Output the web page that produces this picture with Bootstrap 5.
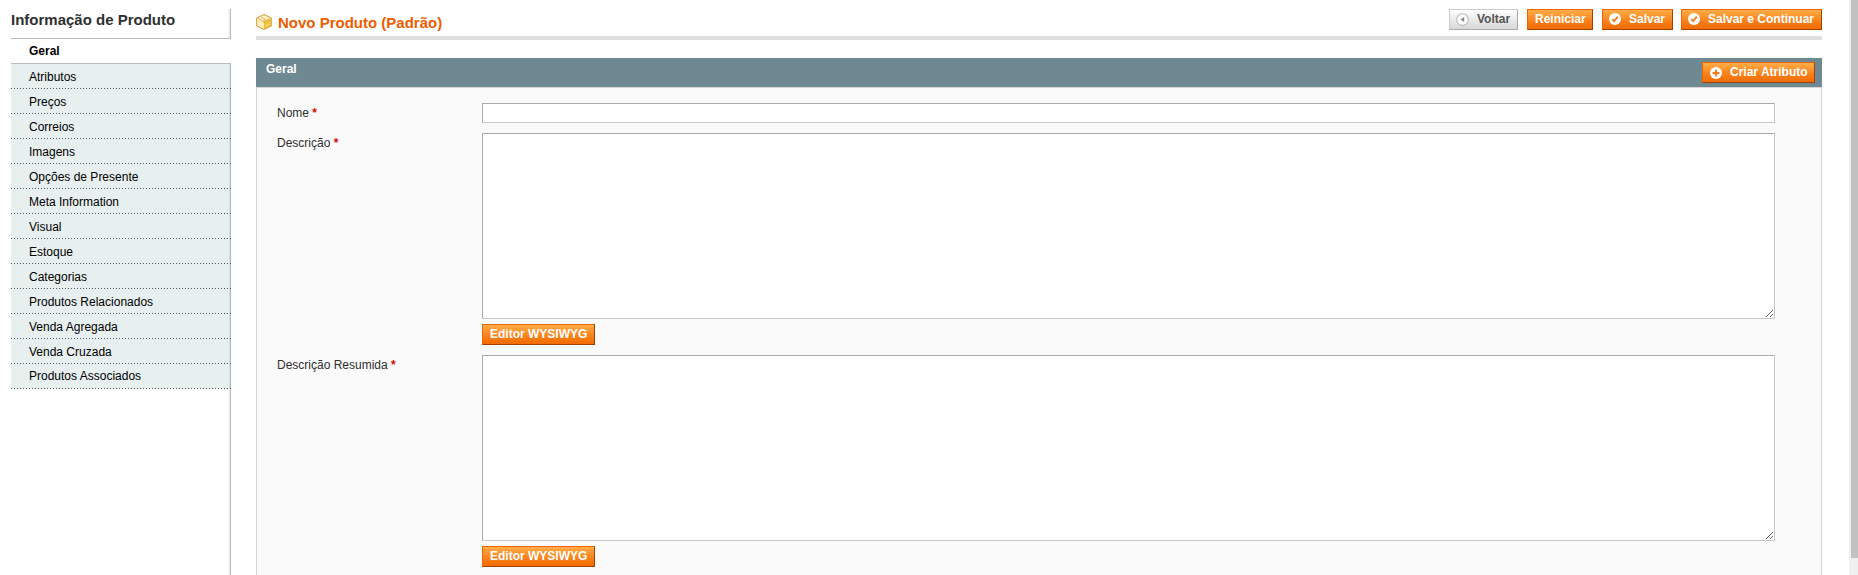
<!DOCTYPE html>
<html lang="pt-BR">
<head>
<meta charset="utf-8">
<title>Novo Produto</title>
<link href="https://cdn.jsdelivr.net/npm/bootstrap@5.3.0/dist/css/bootstrap.min.css" rel="stylesheet">
<style>
html,body{height:100%;overflow:hidden}
body{font:12px/18px "Liberation Sans",Arial,sans-serif;color:#2f2f2f;background:#fff}
.side{width:220px;margin:9px 25px 0 11px;background:linear-gradient(90deg,#f6f6f6 0 1px,#ebebeb 1px 2px,#bcbcbc 2px 3px) right/3px 100% no-repeat}
.side h3{font-size:15px;line-height:20px;font-weight:700;height:29px;margin:0;padding-top:1px}
.tabs{border-radius:0;--bs-list-group-border-radius:0}
.tabs a{display:block;height:25px;line-height:18px;padding:4px 18px 0;color:#000;text-decoration:none;border:0;
 background:repeating-linear-gradient(90deg,#4f5b5d 0 1px,transparent 1px 3px) 0 100%/100% 1px no-repeat,linear-gradient(90deg,#d5dfdf 0 1px,#a9bfc3 1px 2px) right/2px 100% no-repeat,#e7efef}
.tabs a:last-child{padding-top:3px}
.tabs a.current{height:26px;padding-top:3px;background:#fff;border:solid #bcbcbc;border-width:1px 0;font-weight:700}
.page-head{height:31px;border-bottom:4px solid #dfdfdf;margin-top:9px}
.page-head,.panel-head{flex-shrink:0}
.page-head h1{font-size:15px;line-height:20px;font-weight:700;color:#eb5e00;margin:0;padding-top:4px}
.page-head svg.cube{margin-top:5px;margin-right:6px;flex:none}
.mbtn{--bs-btn-border-radius:0;height:21px;padding:0 7px;border:1px solid;border-color:#ed6502 #a04300 #a04300 #ed6502;border-radius:0;font:bold 12px/19px "Liberation Sans",Arial,sans-serif;color:#fff;background:linear-gradient(#ffac47,#fd9a35 25%,#f77c16 65%,#f46b00);display:flex;align-items:flex-start;white-space:nowrap}
.mbtn:hover{color:#fff}
.mbtn svg{margin:3px 8px 0 -1px;flex:none}
.mbtn.back{color:#555;border-color:#ccc #aaa #aaa #ccc;background:linear-gradient(#fff,#eee 40%,#d8d8d8)}
.panel-head{height:29px;background:#6f8992;margin-top:18px;padding:4px 7px 0 10px;color:#fff;font-weight:700}
.panel-head .ttl{line-height:14px}
.panel-body{background:#fafafa;border:1px solid #d6d6d6;border-bottom:0;padding:15px 46px 0 20px;min-height:0}
.field{margin-bottom:10px}
.field label{width:205px;flex:none;line-height:18px;padding-top:1px}
.req{color:#d40707;font-weight:700}
.ctl{display:block;width:100%;background:#fff;border:1px solid;border-color:#aaa #c8c8c8 #c8c8c8 #aaa;border-radius:0;padding:2px;outline:0}
input.ctl{height:20px}
textarea.ctl{height:186px;margin-bottom:5px}
.rail{width:9px;background:#f0f0f0;padding-left:2px;margin-left:27px}
.thumb{height:558px;background:#c1c1c1}
</style>
</head>
<body>
<div class="d-flex h-100">
 <aside class="side flex-shrink-0">
  <h3>Informação de Produto</h3>
  <nav class="tabs list-group">
   <a class="current" href="#">Geral</a>
   <a href="#">Atributos</a><a href="#">Preços</a><a href="#">Correios</a><a href="#">Imagens</a><a href="#">Opções de Presente</a><a href="#">Meta Information</a><a href="#">Visual</a><a href="#">Estoque</a><a href="#">Categorias</a><a href="#">Produtos Relacionados</a><a href="#">Venda Agregada</a><a href="#">Venda Cruzada</a><a href="#">Produtos Associados</a>
  </nav>
 </aside>
 <main class="flex-grow-1 d-flex flex-column">
  <header class="page-head d-flex justify-content-between align-items-start">
   <div class="d-flex">
    <svg class="cube" width="16" height="16" viewBox="0 0 16 16"><path d="M8 .6 15.3 4v8L8 15.5.7 12V4z" fill="#fbe5a4" stroke="#cfa04a" stroke-width="1.1"/><path d="M8 1.3 14.4 4.4 8 7.6 1.6 4.4z" fill="#fff3c9"/><path d="M8 7.6 14.6 4.4v7.3L8 14.9z" fill="#f0bd34"/><path d="M1.4 4.4 8 7.6v7.2L1.4 11.6z" fill="#fdedb8"/><path d="m9.5 10.6 3.8-2v2.6l-3.8 2z" fill="#f9d55e"/><path d="m5 3.2 5.4 2.6M8 5.4v3.4M1.8 4.6 8 7.6l6.2-3" fill="none" stroke="#d8ab4d" stroke-width=".8"/></svg>
    <h1>Novo Produto (Padrão)</h1>
   </div>
   <div class="d-flex">
    <button class="btn mbtn back" style="width:69px;margin-right:9px"><svg width="13" height="13" viewBox="0 0 13 13"><circle cx="6.5" cy="6.5" r="5.8" fill="#fff" stroke="#bbb" stroke-width="1.1"/><path d="M8.2 4v5L4.3 6.5z" fill="#888"/></svg>Voltar</button>
    <button class="btn mbtn" style="width:66px;margin-right:9px">Reiniciar</button>
    <button class="btn mbtn" style="width:71px;margin-right:8px"><svg width="12" height="12" viewBox="0 0 12 12"><circle cx="6" cy="6" r="6" fill="#fff"/><path d="m3.2 6.2 1.9 1.9 3.8-4.4" fill="none" stroke="#f47a1c" stroke-width="1.8"/></svg>Salvar</button>
    <button class="btn mbtn" style="width:141px"><svg width="12" height="12" viewBox="0 0 12 12"><circle cx="6" cy="6" r="6" fill="#fff"/><path d="m3.2 6.2 1.9 1.9 3.8-4.4" fill="none" stroke="#f47a1c" stroke-width="1.8"/></svg>Salvar e Continuar</button>
   </div>
  </header>
  <div class="panel-head d-flex justify-content-between align-items-start">
   <span class="ttl">Geral</span>
   <button class="btn mbtn" style="width:113px;padding-left:8px"><svg width="12" height="12" style="margin-top:4px" viewBox="0 0 12 12"><circle cx="6" cy="6" r="6" fill="#fff"/><path d="M6 2.5v7M2.5 6h7" stroke="#f47a1c" stroke-width="1.8"/></svg>Criar Atributo</button>
  </div>
  <section class="panel-body flex-grow-1">
   <div class="field d-flex"><label for="n">Nome <span class="req">*</span></label><input id="n" class="ctl" type="text"></div>
   <div class="field d-flex"><label for="d">Descrição <span class="req">*</span></label><div class="flex-grow-1"><textarea id="d" class="ctl"></textarea><button class="btn mbtn">Editor WYSIWYG</button></div></div>
   <div class="field d-flex"><label for="r">Descrição Resumida <span class="req">*</span></label><div class="flex-grow-1"><textarea id="r" class="ctl"></textarea><button class="btn mbtn">Editor WYSIWYG</button></div></div>
  </section>
 </main>
 <div class="rail flex-shrink-0"><div class="thumb"></div></div>
</div>
<script src="https://cdn.jsdelivr.net/npm/bootstrap@5.3.0/dist/js/bootstrap.bundle.min.js"></script>
</body>
</html>
